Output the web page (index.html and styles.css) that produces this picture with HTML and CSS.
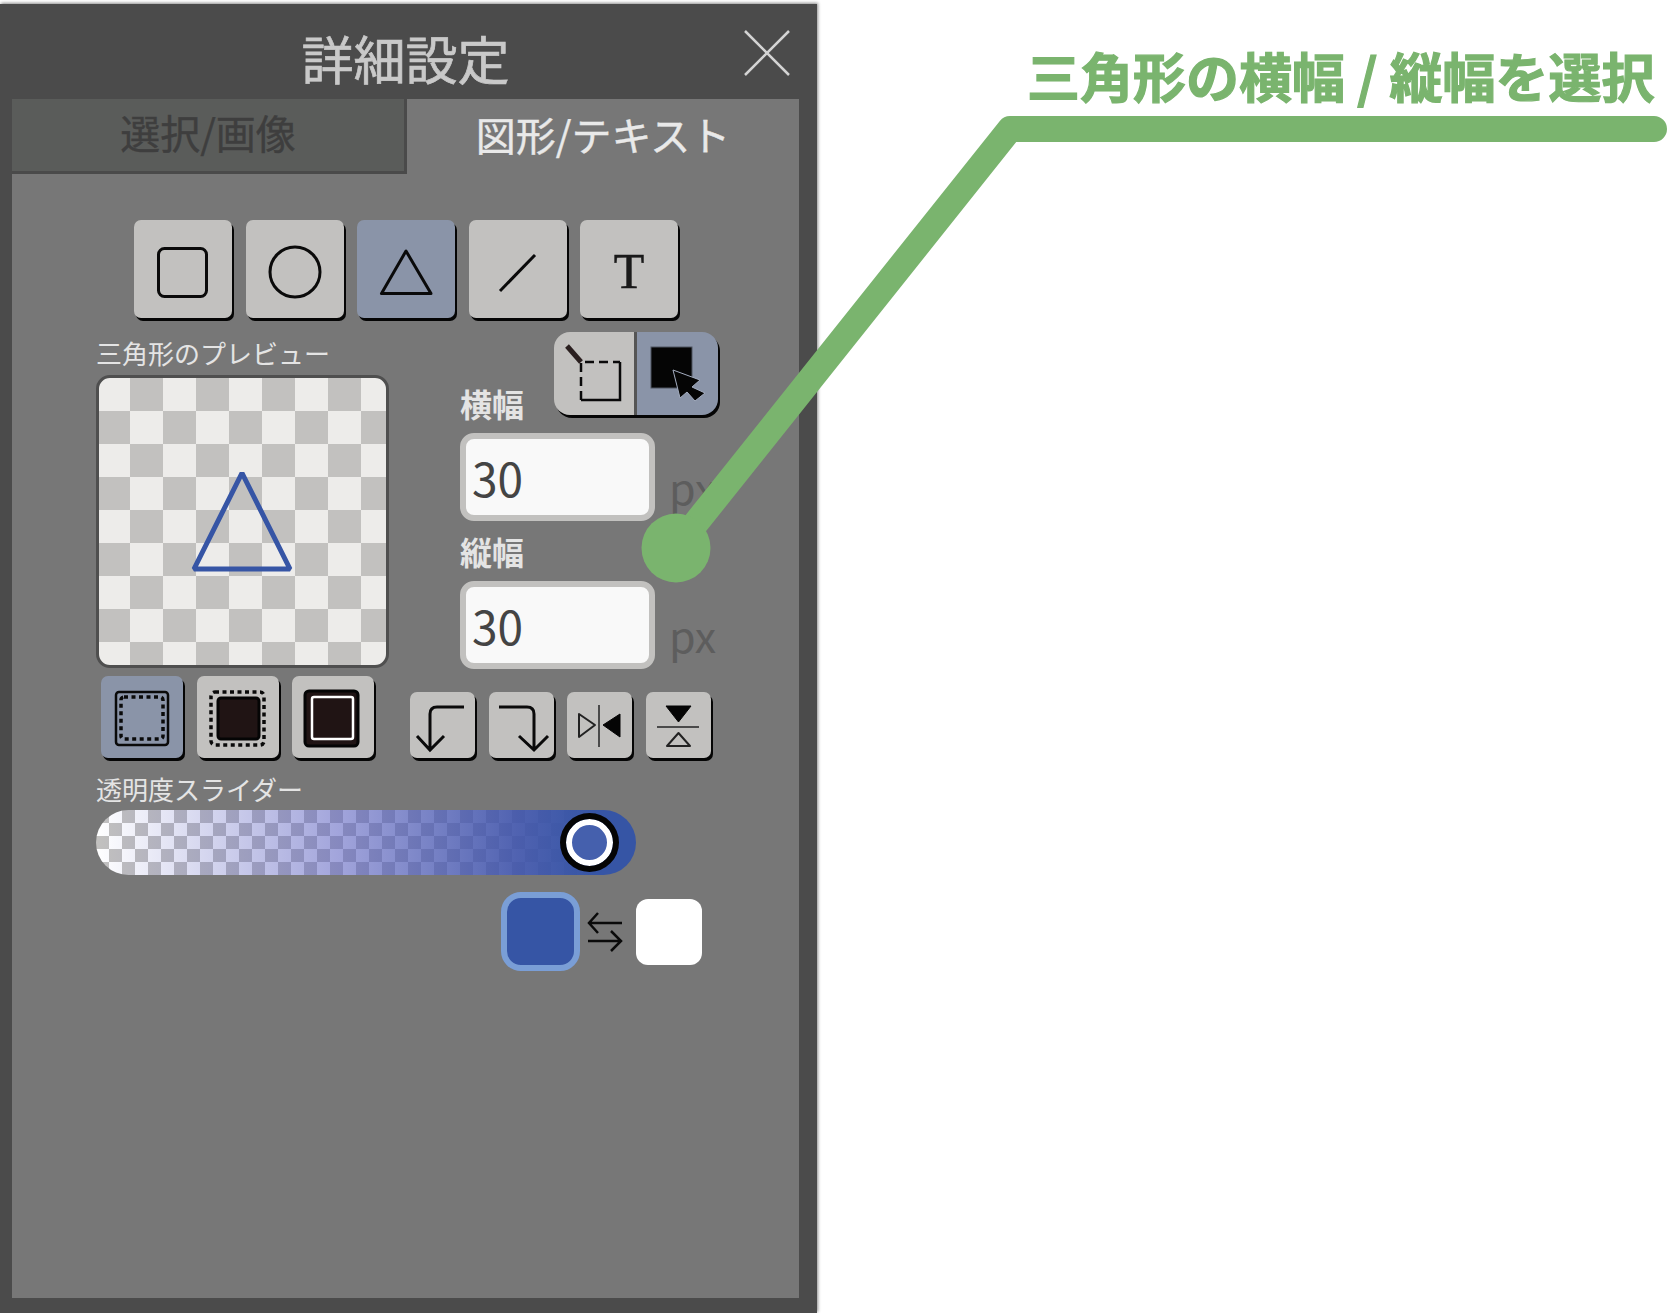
FILE: index.html
```html
<!DOCTYPE html>
<html lang="ja">
<head>
    <meta charset="UTF-8">
    <meta name="viewport" content="width=device-width, initial-scale=1.0">
    <title>詳細設定</title>
    <link rel="stylesheet" href="styles.css">
</head>
<body>
    <div id="panel">
        <div class="title-bar">
            <h1>詳細設定</h1>
            <svg class="close-icon" viewBox="0 0 46 46"><path d="M1 1L45 45M45 1L1 45"/></svg>
        </div>

        <div id="sheet">
            <!-- Tabs -->
            <div class="tabs">
                <div class="tab tab-off">選択/画像</div>
                <div class="tab tab-on">図形/テキスト</div>
            </div>

            <!-- Shape tools -->
            <div class="tools">
                <div class="btn tool"><svg viewBox="0 0 98 98"><rect x="24.5" y="28.5" width="48" height="48" rx="6"/></svg></div>
                <div class="btn tool"><svg viewBox="0 0 98 98"><circle cx="49" cy="52" r="25"/></svg></div>
                <div class="btn tool active"><svg viewBox="0 0 98 98"><path d="M49 31L24.5 73.5H74Z" stroke-linejoin="round"/></svg></div>
                <div class="btn tool"><svg viewBox="0 0 98 98"><path d="M31 71L66 35"/></svg></div>
                <div class="btn tool tool-text">T</div>
            </div>

            <!-- Preview and size -->
            <div class="middle">
                <div class="preview-col">
                    <div class="small-label">三角形のプレビュー</div>
                    <div class="preview">
                        <svg viewBox="0 0 287 287"><path d="M143 95L95 191H191Z"/></svg>
                    </div>
                </div>
                <div class="size-col">
                    <div class="size-head">
                        <div class="size-label label-first">横幅</div>
                        <div class="segment">
                            <div class="seg-item">
                                <svg viewBox="0 0 80 83"><path class="thick" d="M13 14L27 30"/><path class="dash" d="M27 68V30H66"/><path d="M27 68H66V30"/></svg>
                            </div>
                            <div class="seg-item active">
                                <svg viewBox="0 0 80 83"><rect class="solid" x="14" y="15" width="41" height="41"/><path class="cursor" d="M36 38L63 48L55 55L68 61L58 69L50 60L43 66Z"/></svg>
                            </div>
                        </div>
                    </div>
                    <div class="input-row">
                        <div class="num-input">30</div>
                        <span class="unit">px</span>
                    </div>
                    <div class="size-label label-second">縦幅</div>
                    <div class="input-row">
                        <div class="num-input">30</div>
                        <span class="unit">px</span>
                    </div>
                </div>
            </div>

            <!-- Border modes and transforms -->
            <div class="edit-row">
                <div class="btn-group group-mode">
                    <div class="btn mode active"><svg viewBox="0 0 82 82"><rect class="frame" x="15" y="16" width="52" height="53" rx="3"/><rect class="dots" x="20" y="21" width="42" height="42" rx="3"/></svg></div>
                    <div class="btn mode"><svg viewBox="0 0 82 82"><rect class="dots" x="14" y="16" width="53" height="53" rx="4"/><rect class="dark" x="21" y="22" width="41" height="41" rx="3"/></svg></div>
                    <div class="btn mode"><svg viewBox="0 0 82 82"><rect class="dark" x="13" y="15" width="53" height="55" rx="4"/><rect class="white-line" x="20" y="21" width="41" height="42" rx="2"/></svg></div>
                </div>
                <div class="btn-group group-small">
                    <div class="btn small"><svg viewBox="0 0 65 66"><path class="bent" d="M54 15H27Q20 15 20 22V58M7 44L20 58L34 44"/></svg></div>
                    <div class="btn small"><svg viewBox="0 0 65 66"><path class="bent" d="M10 15H38Q45 15 45 22V58M30 44L45 58L59 44"/></svg></div>
                    <div class="btn small"><svg viewBox="0 0 65 66"><path class="mid-line" d="M32 13V55"/><path class="thin" d="M12 22L28 33L12 45Z" stroke-linejoin="round"/><path class="solid-tri" d="M53 22L36 33L53 45Z"/></svg></div>
                    <div class="btn small"><svg viewBox="0 0 65 66"><path class="solid-tri" d="M20 14H45L32.5 30Z"/><path class="mid-line" d="M11 35H53"/><path class="thin" d="M32.5 41L21 54H44Z" stroke-linejoin="round"/></svg></div>
                </div>
            </div>

            <!-- Opacity slider -->
            <div class="small-label label-slider">透明度スライダー</div>
            <div class="slider">
                <div class="thumb"></div>
            </div>

            <!-- Colors -->
            <div class="colors">
                <div class="swatch swatch-main"></div>
                <svg class="swap-icon" viewBox="0 0 36 40"><path d="M35 11H2M11 1L2 11L11 21M1 29H34M24 19L34 29L24 39"/></svg>
                <div class="swatch swatch-sub"></div>
            </div>
        </div>
    </div>

    <!-- Callout -->
    <div class="callout-text">三角形の横幅 / 縦幅を選択</div>
    <svg class="callout-line" viewBox="0 0 1667 1313">
        <path d="M676 548L1010 129H1654"/>
        <circle cx="676" cy="548" r="34.5"/>
    </svg>
</body>
</html>
```

FILE: styles.css
```css
body {
    font-family: "Noto Sans CJK JP", "Noto Sans", sans-serif;
    margin: 0;
    background-color: #ffffff;
    height: 1313px;
    overflow: hidden;
}

svg {
    display: block;
    fill: none;
    stroke: #0a0a0a;
}

#panel {
    width: 817px;
    height: 1309px;
    margin-top: 4px;
    padding: 0 18px 15px 12px;
    box-sizing: border-box;
    display: flex;
    flex-direction: column;
    background-color: #4b4b4b;
    box-shadow: 1px -1px 3px rgba(0, 0, 0, 0.45);
}

.title-bar {
    height: 95px;
    flex-shrink: 0;
    display: flex;
    justify-content: center;
    position: relative;
}

h1 {
    margin: 21px 0 0;
    font-size: 52px;
    line-height: 66px;
    font-weight: 400;
    -webkit-text-stroke: 0.7px #c9c9c9;
    color: #c9c9c9;
}

.close-icon {
    position: absolute;
    top: 26px;
    right: 9px;
    width: 46px;
    height: 46px;
    stroke: #d4d4d4;
    stroke-width: 2.5;
}

#sheet {
    flex: 1;
    background-color: #777777;
    display: flex;
    flex-direction: column;
}

.tabs {
    display: flex;
    height: 75px;
}

.tab {
    display: flex;
    align-items: center;
    justify-content: center;
    box-sizing: border-box;
    font-size: 40px;
    padding-bottom: 6px;
}

.tab-off {
    width: 395px;
    background-color: #5a5c5a;
    border-right: 3px solid #4a4a4a;
    border-bottom: 3px solid #4a4a4a;
    color: #3e3e3e;
    -webkit-text-stroke: 0.4px #3e3e3e;
}

.tab-on {
    width: 392px;
    color: #e9e9e9;
    -webkit-text-stroke: 0.4px #e9e9e9;
}

.btn {
    background-color: #c2c1bf;
    border-radius: 7px;
    box-shadow: 2px 3px 0 #050505;
    box-sizing: border-box;
}

.btn.active {
    background-color: #8a94a8;
}

.tools {
    display: flex;
    gap: 13.5px;
    margin: 46px 0 0 122px;
}

.tool {
    width: 98px;
    height: 98px;
    flex-shrink: 0;
}

.tool svg {
    stroke-width: 3;
}

.tool-text {
    text-align: center;
    font-family: "Liberation Serif", serif;
    font-size: 50px;
    line-height: 102px;
    color: #1a1a1a;
    -webkit-text-stroke: 0.5px #1a1a1a;
}

.middle {
    display: flex;
    margin: 14px 0 0 84px;
}

.preview-col {
    width: 293px;
    padding-top: 4px;
}

.small-label {
    font-size: 26px;
    line-height: 34px;
    color: #e4e4e4;
    white-space: nowrap;
}

.preview {
    width: 293px;
    height: 293px;
    margin-top: 5px;
    box-sizing: border-box;
    border: 3px solid #4f4f4f;
    border-radius: 14px;
    background: conic-gradient(#c2c1bf 25%, #edecea 0 50%, #c2c1bf 0 75%, #edecea 0) -2px 0 / 66px 66px;
}

.preview svg {
    width: 287px;
    height: 287px;
    stroke: #3655a5;
    stroke-width: 5;
    stroke-linejoin: bevel;
}

.size-col {
    width: 258px;
    margin-left: 71px;
}

.size-head {
    display: flex;
    justify-content: space-between;
    align-items: flex-end;
    height: 101px;
}

.size-label {
    font-size: 32px;
    line-height: 40px;
    font-weight: 700;
    color: #e4e4e4;
}

.label-first {
    margin-bottom: 10px;
}

.label-second {
    margin-top: 10px;
    height: 50px;
}

.segment {
    display: flex;
    align-self: flex-start;
    width: 164px;
    height: 83px;
    border-radius: 16px;
    overflow: hidden;
    filter: drop-shadow(2px 3px 0 #050505);
}

.seg-item {
    width: 80px;
    background-color: #c2c1bf;
}

.seg-item.active {
    width: 84px;
    background-color: #8a94a8;
    border-left: 3px solid #555555;
}

.seg-item svg {
    width: 80px;
    height: 83px;
    stroke-width: 2.5;
}

.thick {
    stroke-width: 5;
    stroke: #2a1f1f;
}

.dash {
    stroke-dasharray: 9 5;
}

.solid {
    fill: #050505;
    stroke: #4f5560;
    stroke-width: 1;
}

.cursor {
    fill: #050505;
    stroke: #a4adc0;
    stroke-width: 1;
}

.input-row {
    display: flex;
    align-items: flex-end;
}

.num-input {
    width: 195px;
    height: 88px;
    box-sizing: border-box;
    padding-left: 6px;
    border: 6px solid #c2c1bf;
    border-radius: 14px;
    background-color: #f9f9f9;
    font-size: 46px;
    line-height: 76px;
    color: #444444;
}

.unit {
    margin: 0 0 0 14px;
    font-size: 43px;
    line-height: 70px;
    color: #5d5d5d;
}

.edit-row {
    display: flex;
    align-items: flex-end;
    margin: 7px 0 0 89px;
}

.btn-group {
    display: flex;
}

.group-mode {
    gap: 13.5px;
}

.group-small {
    gap: 13.7px;
    margin-left: 36px;
}

.mode {
    width: 82px;
    height: 82px;
}

.small {
    width: 65px;
    height: 66px;
}

.frame {
    stroke-width: 2.5;
}

.bent {
    stroke-width: 3;
}

.dots {
    stroke-width: 3.5;
    stroke-dasharray: 4 3.5;
}

.dark {
    fill: #201414;
    stroke: #050505;
    stroke-width: 3;
}

.white-line {
    stroke: #ffffff;
    stroke-width: 2.5;
}

.thin {
    stroke-width: 2;
    stroke: #222222;
}

.mid-line {
    stroke-width: 2;
    stroke: #4a4a4a;
}

.solid-tri {
    fill: #050505;
    stroke: #050505;
    stroke-width: 1;
}

.label-slider {
    margin: 14px 0 0 84px;
}

.slider {
    width: 540px;
    height: 65px;
    margin: 4px 0 0 84px;
    border-radius: 33px;
    display: flex;
    align-items: center;
    justify-content: flex-end;
    padding-right: 17px;
    box-sizing: border-box;
    background:
        linear-gradient(to right, rgba(85, 90, 190, 0), rgba(85, 90, 190, 0.55) 45%, rgba(65, 85, 170, 0.92) 78%, #3655a5 92%),
        conic-gradient(#ffffff 25%, #c2c1bf 0 50%, #ffffff 0 75%, #c2c1bf 0) 0 0 / 26px 26px;
}

.thumb {
    width: 59px;
    height: 59px;
    box-sizing: border-box;
    border: 6px solid #050505;
    border-radius: 50%;
    background-color: #4560ad;
    box-shadow: inset 0 0 0 6px #ffffff;
}

.colors {
    display: flex;
    align-items: center;
    margin: 17px 0 0 489px;
}

.swatch {
    box-sizing: border-box;
}

.swatch-main {
    width: 79px;
    height: 79px;
    border: 6px solid #7a9ed6;
    border-radius: 20px;
    background-color: #3655a5;
}

.swap-icon {
    width: 36px;
    height: 40px;
    margin-left: 7px;
    stroke-width: 2.5;
}

.swatch-sub {
    width: 66px;
    height: 66px;
    margin-left: 13px;
    border-radius: 12px;
    background-color: #ffffff;
}

.callout-line {
    position: absolute;
    left: 0;
    top: 0;
    width: 1667px;
    height: 1313px;
    stroke: #7ab46e;
    stroke-width: 26;
    stroke-linecap: round;
    stroke-linejoin: round;
    pointer-events: none;
}

.callout-line circle {
    fill: #7ab46e;
    stroke: none;
}

.callout-text {
    position: absolute;
    left: 1027px;
    top: 39px;
    font-size: 53px;
    line-height: 72px;
    font-weight: 700;
    color: #7ab46e;
    -webkit-text-stroke: 1.2px #7ab46e;
    white-space: nowrap;
}
```
